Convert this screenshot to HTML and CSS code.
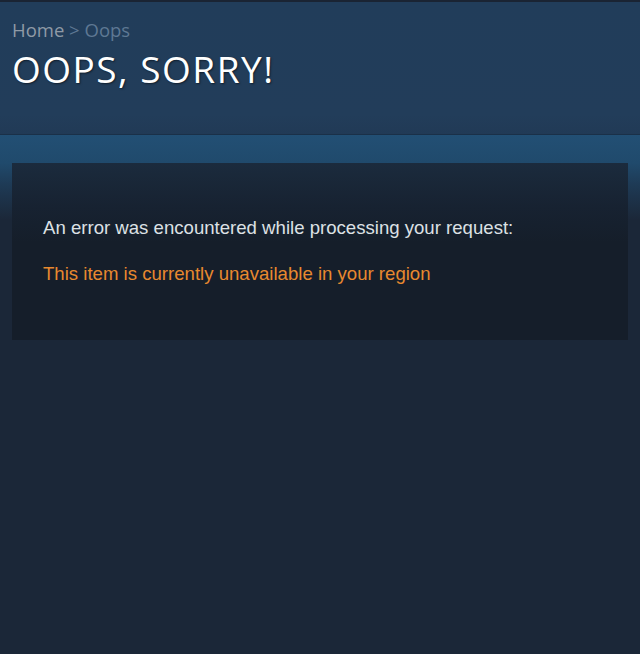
FILE: index.html
```html
<!DOCTYPE html>
<html lang="en">
<head>
    <meta charset="UTF-8">
    <meta name="viewport" content="width=device-width, initial-scale=1.0">
    <title>Oops, Sorry!</title>
    <link rel="stylesheet" href="styles.css">
</head>
<body>

    <!-- Page header -->
    <div class="page-header">
        <div class="breadcrumbs">
            <a href="#" class="crumb">Home</a> <span class="sep">&gt;</span> <span class="current">Oops</span>
        </div>
        <h1 class="page-title">OOPS, SORRY!</h1>
    </div>

    <!-- Error box sits on the blue band that fades into the page -->
    <div class="content">
        <div class="error-box">
            <h3 class="error-intro">An error was encountered while processing your request:</h3>
            <p class="error-msg">This item is currently unavailable in your region</p>
        </div>
    </div>

</body>
</html>
```

FILE: styles.css
```css
body {
    margin: 0;
    font-family: Arial, "Liberation Sans", sans-serif;
    background-color: #1b2738;
    min-height: 654px;
}

.page-header {
    box-sizing: border-box;
    height: 135px;
    padding: 16px 12px 0;
    border-top: 2px solid #1a2433;
    border-bottom: 1px solid #1a3048;
    background: linear-gradient(to bottom, #213d5a 0%, #223d5a 85%, #213a56 100%);
}

.breadcrumbs {
    font-family: "Open Sans", "Noto Sans", sans-serif;
    font-size: 18.5px;
    line-height: 24px;
    color: #8f9aa6;
}

.crumb {
    color: #8f9aa6;
    text-decoration: none;
}

.sep,
.current {
    color: #5e7893;
}

.page-title {
    margin: 5px 0 0;
    font-family: "Open Sans", "Noto Sans", sans-serif;
    font-weight: normal;
    font-size: 37px;
    line-height: 44px;
    letter-spacing: 1.5px;
    color: #ffffff;
    text-shadow: 1px 1px 2px rgba(0, 0, 0, 0.5);
}

.content {
    padding: 28px 12px 0;
    background: linear-gradient(to bottom, #224f74 0px, #204a6c 28px, #1e3a55 50px, #1b2738 85px);
}

.error-box {
    height: 177px;
    padding: 0 31px;
    box-sizing: border-box;
    background: linear-gradient(to bottom, #1b2b3d 0%, #172231 25%, #151e2a 45%, #151e2a 100%);
    overflow: hidden;
}

.error-intro {
    margin: 53px 0 0;
    font-weight: normal;
    font-size: 18.6px;
    line-height: 24px;
    color: #dde1e5;
}

.error-msg {
    margin: 22px 0 0;
    font-size: 18.6px;
    line-height: 24px;
    color: #e8892f;
}
```
